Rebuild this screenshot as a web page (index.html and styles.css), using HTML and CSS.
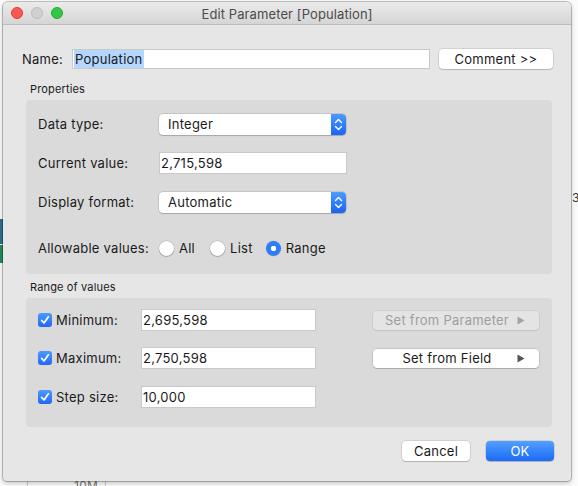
FILE: index.html
```html
<!DOCTYPE html>
<html>
<head>
<meta charset="utf-8">
<link rel="stylesheet" href="styles.css">
</head>
<body>
<div class="desktop">
  <div class="bg-strip bg-blue"></div>
  <div class="bg-strip bg-green"></div>
  <div class="bg-line bg-line1"></div>
  <div class="bg-line bg-line2"></div>
  <div class="bg-text bg-10m">10M</div>
  <div class="bg-text bg-3">3</div>

  <div class="window">
    <div class="titlebar">
      <div class="lights">
        <span class="light red"></span>
        <span class="light grey"></span>
        <span class="light green"></span>
      </div>
      <div class="title">Edit Parameter [Population]</div>
    </div>

    <div class="body">
      <div class="name-row">
        <div class="name-label">Name:</div>
        <div class="field name-field"><span class="sel">Population</span></div>
        <div class="btn comment-btn">Comment &gt;&gt;</div>
      </div>

      <div class="section-label">Properties</div>
      <div class="panel props">
        <div class="row">
          <div class="row-label">Data type:</div>
          <div class="select">
            <span class="select-text">Integer</span>
            <span class="select-arrow">
              <svg width="15" height="21" viewBox="0 0 15 21"><path d="M4.5 8.5 L7.5 5.5 L10.5 8.5 M4.5 12.5 L7.5 15.5 L10.5 12.5" fill="none" stroke="#fff" stroke-width="1.4" stroke-linecap="round" stroke-linejoin="round"/></svg>
            </span>
          </div>
        </div>
        <div class="row">
          <div class="row-label">Current value:</div>
          <div class="field cur-field">2,715,598</div>
        </div>
        <div class="row">
          <div class="row-label">Display format:</div>
          <div class="select">
            <span class="select-text">Automatic</span>
            <span class="select-arrow">
              <svg width="15" height="21" viewBox="0 0 15 21"><path d="M4.5 8.5 L7.5 5.5 L10.5 8.5 M4.5 12.5 L7.5 15.5 L10.5 12.5" fill="none" stroke="#fff" stroke-width="1.4" stroke-linecap="round" stroke-linejoin="round"/></svg>
            </span>
          </div>
        </div>
        <div class="row row-allow">
          <div class="row-label">Allowable values:</div>
          <div class="radios">
            <span class="radio"></span><span class="radio-text">All</span>
            <span class="radio"></span><span class="radio-text">List</span>
            <span class="radio on"></span><span class="radio-text">Range</span>
          </div>
        </div>
      </div>

      <div class="section-label range-label">Range of values</div>
      <div class="panel range">
        <div class="rrow">
          <span class="check"><svg width="14" height="14" viewBox="0 0 14 14"><path d="M3.6 7.4 L6 10 L10.4 3.8" fill="none" stroke="#fff" stroke-width="1.7" stroke-linecap="round" stroke-linejoin="round"/></svg></span>
          <span class="rlabel">Minimum:</span>
          <div class="field rfield">2,695,598</div>
          <div class="btn side-btn disabled"><span>Set from Parameter</span><svg class="tri" width="8" height="9" viewBox="0 0 8 9"><path d="M0.5 0.5 L7.5 4.5 L0.5 8.5 Z" fill="#a3a3a3"/></svg></div>
        </div>
        <div class="rrow rrow2">
          <span class="check"><svg width="14" height="14" viewBox="0 0 14 14"><path d="M3.6 7.4 L6 10 L10.4 3.8" fill="none" stroke="#fff" stroke-width="1.7" stroke-linecap="round" stroke-linejoin="round"/></svg></span>
          <span class="rlabel">Maximum:</span>
          <div class="field rfield">2,750,598</div>
          <div class="btn side-btn"><span>Set from Field</span><svg class="tri" width="8" height="9" viewBox="0 0 8 9"><path d="M0.5 0.5 L7.5 4.5 L0.5 8.5 Z" fill="#555"/></svg></div>
        </div>
        <div class="rrow rrow3">
          <span class="check"><svg width="14" height="14" viewBox="0 0 14 14"><path d="M3.6 7.4 L6 10 L10.4 3.8" fill="none" stroke="#fff" stroke-width="1.7" stroke-linecap="round" stroke-linejoin="round"/></svg></span>
          <span class="rlabel">Step size:</span>
          <div class="field rfield">10,000</div>
        </div>
      </div>

      <div class="footer">
        <div class="btn foot-btn">Cancel</div>
        <div class="btn foot-btn ok">OK</div>
      </div>
    </div>
  </div>
</div>
</body>
</html>
```

FILE: styles.css
```css
* { box-sizing: border-box; }
html, body { margin: 0; padding: 0; }
body {
  width: 578px;
  height: 486px;
  overflow: hidden;
  background: #ffffff;
  font-family: "Inter", "Noto Sans", sans-serif;
  font-size: 13px;
  letter-spacing: 0.25px;
  color: #1a1a1a;
}
.desktop {
  position: relative;
  width: 578px;
  height: 486px;
  background: #fbfbfb;
}
.bg-strip { position: absolute; left: 0; width: 4px; }
.bg-blue { top: 219px; height: 25px; background: #2f6f8f; }
.bg-green { top: 245px; height: 18px; background: #1f8d5c; }
.bg-line { position: absolute; top: 478px; width: 1px; height: 8px; background: #c9c9c9; }
.bg-line1 { left: 27px; }
.bg-line2 { left: 105px; }
.bg-text { position: absolute; font-size: 12px; line-height: 12px; color: #777; }
.bg-10m { left: 74px; top: 480px; }
.bg-3 { left: 572px; top: 192px; color: #333; }

.window {
  position: absolute;
  left: 3px;
  top: 2px;
  width: 568px;
  height: 479px;
  background: #e6e6e6;
  border-radius: 5px 5px 4px 4px;
  box-shadow: 0 0 0 1px rgba(0,0,0,0.22), 0 2px 5px rgba(0,0,0,0.25);
  overflow: hidden;
}
.titlebar {
  position: relative;
  height: 23px;
  background: linear-gradient(#ebebeb, #d5d5d5);
  border-bottom: 1px solid #bdbdbd;
  display: flex;
  align-items: center;
}
.lights {
  display: flex;
  gap: 8px;
  padding-left: 8px;
}
.light {
  width: 12px;
  height: 12px;
  border-radius: 50%;
}
.red { background: #fc5753; border: 1px solid #df3d39; }
.grey { background: #d0d0d0; border: 1px solid #bcbcbc; }
.green { background: #33c748; border: 1px solid #26a83a; }
.title {
  position: absolute;
  left: 0;
  right: 0;
  top: 5px;
  text-align: center;
  color: #4b4b4b;
  font-size: 13px;
  line-height: 15px;
  letter-spacing: 0.1px;
}

.body { padding-top: 24px; }

.name-row {
  display: flex;
  align-items: center;
  height: 20px;
  margin-left: 19px;
}
.name-label { width: 50px; }
.field {
  background: #fff;
  border: 1px solid #c9c9c9;
  height: 22px;
  line-height: 20px;
  padding-left: 1px;
  white-space: nowrap;
}
.name-field {
  width: 358px;
  height: 20px;
  line-height: 18px;
}
.sel {
  background: #b3d7ff;
  padding: 1px 1px;
}
.btn {
  background: #fff;
  border-radius: 4px;
  box-shadow: 0 0 0 0.5px rgba(0,0,0,0.18), 0 1px 1px rgba(0,0,0,0.15);
  text-align: center;
  white-space: nowrap;
}
.comment-btn {
  margin-left: 9px;
  width: 114px;
  height: 20px;
  line-height: 20px;
}

.section-label {
  margin: 14px 0 0 27px;
  font-size: 11px;
  line-height: 13px;
  height: 13px;
  letter-spacing: 0.15px;
}
.range-label { margin-top: 7px; }

.panel {
  margin: 4px 0 0 23px;
  width: 526px;
  background: #dadada;
  border-radius: 4px;
}
.props {
  padding: 13px 0 15px 12px;
  display: flex;
  flex-direction: column;
  gap: 17px;
}
.row {
  display: flex;
  align-items: center;
  height: 22px;
}
.row-allow { margin-top: 7px; }
.row-label { width: 121px; }

.select {
  width: 187px;
  height: 21px;
  display: flex;
  background: #fff;
  border-radius: 4px;
  box-shadow: 0 0 0 0.5px rgba(0,0,0,0.2), 0 1px 1px rgba(0,0,0,0.15);
  overflow: hidden;
}
.select-text {
  flex: 1;
  line-height: 21px;
  padding-left: 9px;
}
.select-arrow {
  width: 15px;
  height: 21px;
  background: linear-gradient(#4b9bff, #1c63f6);
  display: flex;
}
.cur-field { width: 188px; }

.radios {
  display: flex;
  align-items: center;
}
.radio {
  width: 15px;
  height: 15px;
  border-radius: 50%;
  background: #fff;
  box-shadow: 0 0 0 0.5px rgba(0,0,0,0.22), 0 1px 1px rgba(0,0,0,0.15);
  margin-right: 5px;
}
.radio.on {
  background: radial-gradient(circle, #fff 0 2.5px, #2f7cf6 3px);
  box-shadow: 0 0 0 0.5px rgba(0,0,0,0.12);
}
.radio-text { margin-right: 15px; }
.radio-text:nth-child(4) { margin-right: 13px; }

.range {
  padding: 11px 0 19px 12px;
  display: flex;
  flex-direction: column;
}
.rrow {
  display: flex;
  align-items: center;
  height: 22px;
}
.rrow2 { margin-top: 16px; }
.rrow3 { margin-top: 17px; }
.check {
  width: 14px;
  height: 14px;
  border-radius: 3px;
  background: linear-gradient(#4b9bff, #2267f3);
  display: flex;
}
.rlabel {
  margin-left: 4px;
  width: 85px;
}
.rfield { width: 175px; }
.side-btn {
  margin-left: 57px;
  width: 166px;
  height: 19px;
  line-height: 19px;
  position: relative;
  padding-right: 18px;
}
.side-btn .tri {
  position: absolute;
  right: 14px;
  top: 5px;
}
.side-btn.disabled {
  background: #e4e4e4;
  color: #9e9e9e;
  box-shadow: 0 0 0 0.5px rgba(0,0,0,0.1), 0 1px 1px rgba(0,0,0,0.06);
}

.footer {
  display: flex;
  justify-content: flex-end;
  gap: 16px;
  margin-top: 14px;
  padding-right: 17px;
}
.foot-btn {
  width: 68px;
  height: 20px;
  line-height: 20px;
}
.ok {
  background: linear-gradient(#52a0ff, #1a6af6);
  color: #fff;
  box-shadow: 0 0 0 0.5px rgba(0,0,0,0.2), 0 1px 1px rgba(0,0,0,0.15);
}
```
